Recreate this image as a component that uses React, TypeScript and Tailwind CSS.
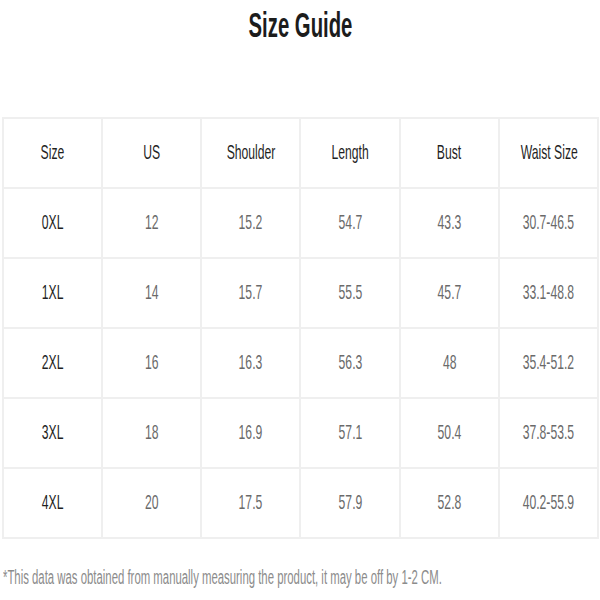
const headers = ['Size', 'US', 'Shoulder', 'Length', 'Bust', 'Waist Size']

const rows = [
  ['0XL', '12', '15.2', '54.7', '43.3', '30.7-46.5'],
  ['1XL', '14', '15.7', '55.5', '45.7', '33.1-48.8'],
  ['2XL', '16', '16.3', '56.3', '48', '35.4-51.2'],
  ['3XL', '18', '16.9', '57.1', '50.4', '37.8-53.5'],
  ['4XL', '20', '17.5', '57.9', '52.8', '40.2-55.9'],
]

const font = { fontFamily: '"Liberation Sans", Arial, sans-serif' }

const Narrow = ({ children, className = '' }: { children: React.ReactNode; className?: string }) => (
  <span className={`inline-block scale-x-[0.58] whitespace-nowrap ${className}`}>{children}</span>
)

export default function App() {
  return (
    <div className="w-[600px] h-[600px] bg-white flex flex-col overflow-hidden" style={font}>
      <h1 className="text-center text-[35px] leading-[50px] font-bold text-[#1c1c1c]">
        <Narrow>Size Guide</Narrow>
      </h1>

      <table className="mt-[67px] ml-[2px] w-[597px] table-fixed border-collapse">
        <thead>
          <tr>
            {headers.map((h) => (
              <th key={h} className="h-[70px] pb-[3px] border-2 border-[#efefef] text-center text-[21px] font-normal text-[#1f1f1f]">
                <Narrow>{h}</Narrow>
              </th>
            ))}
          </tr>
        </thead>
        <tbody>
          {rows.map((row) => (
            <tr key={row[0]}>
              {row.map((cell, i) => (
                <td
                  key={i}
                  className={`h-[70px] pb-[2px] border-2 border-[#efefef] text-center text-[21px] ${i === 0 ? 'text-[#1f1f1f]' : 'text-[#6a6a6a]'}`}
                >
                  <Narrow>{cell}</Narrow>
                </td>
              ))}
            </tr>
          ))}
        </tbody>
      </table>

      <p className="mt-[26px] pl-[3px] text-[19.6px] leading-[24px] text-[#8c8c8c]">
        <Narrow className="origin-left">
          *This data was obtained from manually measuring the product, it may be off by 1-2 CM.
        </Narrow>
      </p>
    </div>
  )
}
